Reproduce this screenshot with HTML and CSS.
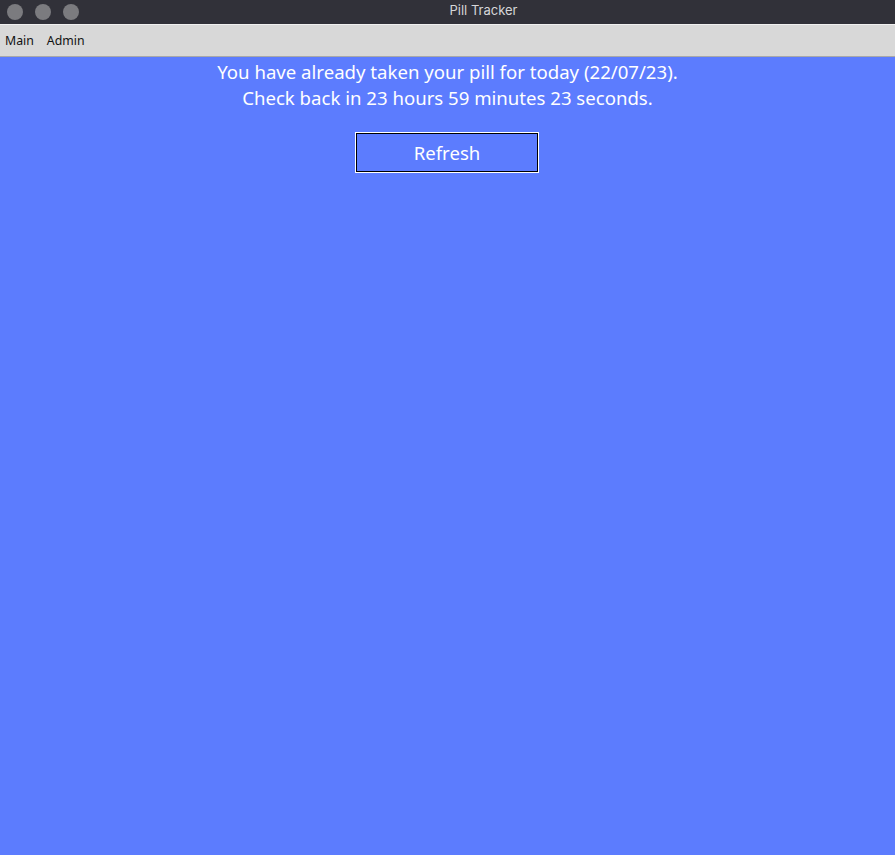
FILE: index.html
```html
<!DOCTYPE html>
<html>
<head>
<meta charset="utf-8">
<link rel="stylesheet" href="styles.css">
</head>
<body>
<div class="window">
  <div class="titlebar">
    <div class="lights">
      <span class="light"></span><span class="light"></span><span class="light"></span>
    </div>
    <div class="title">Pill Tracker</div>
  </div>
  <div class="menubar">
    <span class="menu-item">Main</span>
    <span class="menu-item">Admin</span>
  </div>
  <main class="content">
    <p class="message">You have already taken your pill for today (22/07/23).<br>Check back in 23 hours 59 minutes 23 seconds.</p>
    <button class="refresh">Refresh</button>
  </main>
</div>
</body>
</html>
```

FILE: styles.css
```css
html, body {
  margin: 0;
  padding: 0;
  height: 100%;
}
body {
  background: #5c7cfe;
  font-family: "Noto Sans", "DejaVu Sans", sans-serif;
}
.window {
  display: flex;
  flex-direction: column;
  height: 100%;
}
.titlebar {
  position: relative;
  height: 24px;
  background: #313139;
  display: flex;
  align-items: flex-start;
  justify-content: center;
  padding-left: 72px;
  box-sizing: border-box;
}
.lights {
  position: absolute;
  left: 7px;
  top: 4px;
  display: flex;
  gap: 12px;
}
.light {
  width: 16px;
  height: 16px;
  border-radius: 50%;
  background: #7b7b7f;
}
.title {
  font-family: "Inter", "Liberation Sans", sans-serif;
  font-size: 13px;
  line-height: 20px;
  color: #d6d6d8;
}
.menubar {
  height: 31px;
  background: #d8d8d8;
  border-top: 1px solid #f0f0f0;
  border-bottom: 1px solid #a8a8a8;
  display: flex;
  align-items: center;
  gap: 13px;
  padding-left: 5px;
  font-family: "Noto Sans", "DejaVu Sans", sans-serif;
  font-size: 12.3px;
  color: #111;
}
.content {
  flex: 1;
  background: #5c7cfe;
  display: flex;
  flex-direction: column;
  align-items: center;
}
.message {
  margin: 2px 0 0;
  text-align: center;
  color: #ffffff;
  font-size: 18.6px;
  line-height: 26px;
}
.refresh {
  margin: 22px 1px 0 0;
  width: 182px;
  height: 39px;
  background: #5c7cfe;
  border: 1px solid #000;
  outline: 1px solid #ffffff;
  outline-offset: 0;
  color: #ffffff;
  font-family: "Noto Sans", "DejaVu Sans", sans-serif;
  font-size: 18.6px;
  padding: 0;
}
```
